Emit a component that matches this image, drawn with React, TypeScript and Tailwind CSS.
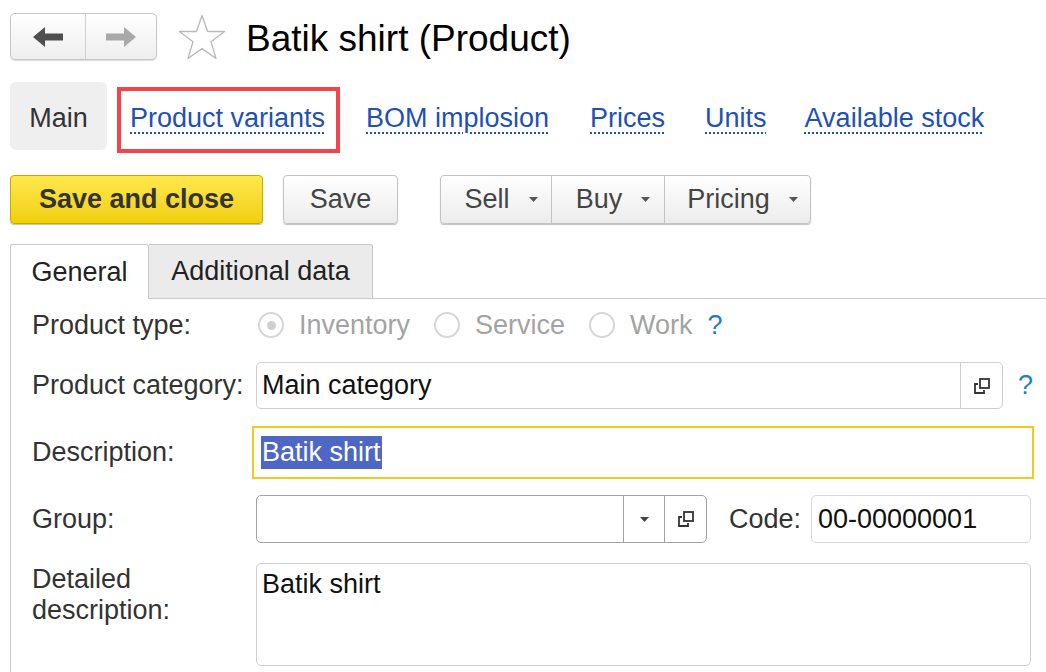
import React from 'react';

// ─── Small drawings ──────────────────────────────────────────

function Arrow({ dir, color }: { dir: 'left' | 'right'; color: string }) {
  return (
    <svg width="30" height="22" viewBox="0 0 30 22" className={dir === 'right' ? 'scale-x-[-1]' : ''}>
      <path d="M0 11 L12 1 V7.5 H30 V14.5 H12 V21 Z" fill={color} />
    </svg>
  );
}

function Star() {
  return (
    <svg width="48" height="46" viewBox="0 0 48 46">
      <polygon
        points="24,1.5 29.6,17.5 46.5,17.5 33,27.8 38,44.5 24,34.6 10,44.5 15,27.8 1.5,17.5 18.4,17.5"
        fill="none"
        stroke="#b9b9b9"
        strokeWidth="1.3"
        strokeLinejoin="round"
      />
    </svg>
  );
}

function OpenIcon() {
  return (
    <svg width="18" height="18" viewBox="0 0 18 18">
      <rect x="7" y="2" width="9" height="9" fill="none" stroke="#333" strokeWidth="1.8" />
      <path d="M5 7 H2 V16 H11 V13" fill="none" stroke="#333" strokeWidth="1.8" />
    </svg>
  );
}

function Caret({ color = '#555' }: { color?: string }) {
  return (
    <svg width="9" height="5" viewBox="0 0 9 5">
      <path d="M0 0 H9 L4.5 5 Z" fill={color} />
    </svg>
  );
}

function Radio({ checked, label }: { checked?: boolean; label: string }) {
  return (
    <div className="flex items-center">
      <span className="flex h-[26px] w-[26px] items-center justify-center rounded-full border-2 border-[#d6d6d6] bg-white">
        {checked && <span className="h-[9px] w-[9px] rounded-full bg-[#cfcfcf]" />}
      </span>
      <span className="ml-[15px] text-[#a3a3a3]">{label}</span>
    </div>
  );
}

// ─── Page ────────────────────────────────────────────────────

const btn =
  'flex h-[49px] items-center rounded-[4px] border border-[#c3c3c3] bg-gradient-to-b from-white to-[#ececec] text-[#444] shadow-[0_1px_1px_rgba(0,0,0,0.25)]';

const linkCls =
  'text-[#1f50b5] underline decoration-dotted decoration-[#1f50b5] decoration-2 underline-offset-[6px]';

const dropCell = 'flex h-full items-center justify-center gap-[19px] pl-[10px]';

export default function App() {
  return (
    <div className="relative h-[672px] w-[1046px] overflow-hidden bg-white font-['Liberation_Sans',Arial,sans-serif] text-[27px] leading-none text-[#333]">
      {/* Title bar */}
      <div className="flex h-[60px] items-end pl-[10px]">
        <div className="flex h-[47px] w-[147px] rounded-[5px] border border-[#c6c6c6] bg-gradient-to-b from-white to-[#eeeeee] shadow-[0_1px_1px_rgba(0,0,0,0.15)]">
          <div className="flex w-[75px] items-center justify-center border-r border-[#d0d0d0]">
            <Arrow dir="left" color="#4f4f4f" />
          </div>
          <div className="flex flex-1 items-center justify-center">
            <Arrow dir="right" color="#a9a9a9" />
          </div>
        </div>
        <div className="mb-[-1px] ml-[21px] self-center pt-[13px]">
          <Star />
        </div>
        <h1 className="ml-[20px] self-center pt-[16px] text-[37px] font-normal text-black">Batik shirt (Product)</h1>
      </div>

      {/* Section links */}
      <div className="mt-[22px] flex items-start pl-[10px]">
        <div className="flex h-[68px] w-[97px] items-center justify-center rounded-[6px] bg-[#efefef] pt-[5px] text-[#333]">
          Main
        </div>
        <div className="ml-[10px] mt-[5px] flex h-[66px] w-[223px] items-center border-4 border-[#f4434a] pb-[4px] pl-[9px]">
          <span className={linkCls}>Product variants</span>
        </div>
        <div className="ml-[26px] flex h-[72px] items-center gap-[41px]">
          <span className={linkCls}>BOM implosion</span>
          <span className={linkCls}>Prices</span>
          <span className="-ml-[1px]">
            <span className={linkCls}>Units</span>
          </span>
          <span className="-ml-[3px]">
            <span className={linkCls}>Available stock</span>
          </span>
        </div>
      </div>

      {/* Command bar */}
      <div className="mt-[21px] flex items-center pl-[10px]">
        <div className="flex h-[49px] w-[253px] items-center justify-center rounded-[4px] border border-[#c9a800] bg-gradient-to-b from-[#ffe84a] to-[#f1cf00] font-bold text-[#333] shadow-[0_1px_1px_rgba(0,0,0,0.25)]">
          Save and close
        </div>
        <div className={`${btn} ml-[20px] w-[115px] justify-center`}>Save</div>
        <div className={`${btn} ml-[42px] w-[371px]`}>
          <div className={`${dropCell} w-[111px] border-r border-[#c3c3c3]`}>
            Sell <Caret />
          </div>
          <div className={`${dropCell} w-[113px] border-r border-[#c3c3c3]`}>
            Buy <Caret />
          </div>
          <div className={`${dropCell} flex-1`}>
            Pricing <Caret />
          </div>
        </div>
      </div>

      {/* Tabs */}
      <div className="mt-[20px] flex pl-[10px]">
        <div className="flex h-[55px] w-[139px] items-center justify-center rounded-t-[3px] border border-b-0 border-[#c8c8c8] bg-white text-[#222]">
          General
        </div>
        <div className="flex h-[55px] w-[224px] items-center justify-center rounded-tr-[3px] border border-l-0 border-[#c8c8c8] bg-[#ebebeb] text-[#222]">
          Additional data
        </div>
        <div className="flex-1 border-b border-[#c8c8c8]" />
      </div>

      {/* Form */}
      <div className="ml-[10px] flex h-[400px] flex-col border-l border-[#c8c8c8] pl-[21px] pt-[5px] text-[#333]">
        <div className="flex h-[42px] items-center">
          <div className="w-[224px]">Product type:</div>
          <div className="ml-[2px] flex items-center gap-[24px]">
            <Radio checked label="Inventory" />
            <Radio label="Service" />
            <Radio label="Work" />
          </div>
          <span className="ml-[15px] text-[#1b7dc9]">?</span>
        </div>

        <div className="mt-[16px] flex h-[47px] items-center">
          <div className="w-[224px]">Product category:</div>
          <div className="flex h-full w-[747px] rounded-[5px] border border-[#cfcfcf]">
            <div className="flex flex-1 items-center pl-[5px] text-[#111]">Main category</div>
            <div className="flex w-[42px] items-center justify-center border-l border-[#cfcfcf]">
              <OpenIcon />
            </div>
          </div>
          <span className="ml-[15px] text-[#1b7dc9]">?</span>
        </div>

        <div className="mt-[17px] flex h-[53px] items-center">
          <div className="w-[220px]">Description:</div>
          <div className="flex h-full w-[782px] items-center border-2 border-[#f5c81c] pl-[7px]">
            <span className="bg-[#4f67c4] px-[1px] py-[3px] text-white">Batik shirt</span>
          </div>
        </div>

        <div className="mt-[16px] flex h-[48px] items-center">
          <div className="w-[224px]">Group:</div>
          <div className="flex h-full w-[451px] rounded-[5px] border border-[#a3a3a3]">
            <div className="flex-1" />
            <div className="flex w-[41px] items-center justify-center border-l border-[#a3a3a3]">
              <Caret color="#444" />
            </div>
            <div className="flex w-[42px] items-center justify-center border-l border-[#a3a3a3]">
              <OpenIcon />
            </div>
          </div>
          <div className="ml-[22px] w-[82px]">Code:</div>
          <div className="flex h-full w-[220px] items-center rounded-[5px] border border-[#d8d8d8] pl-[6px] text-[#111]">
            00-00000001
          </div>
        </div>

        <div className="mt-[20px] flex h-[103px] items-start">
          <div className="w-[224px] pt-[1px] leading-[31px]">
            Detailed
            <br />
            description:
          </div>
          <div className="h-full w-[775px] rounded-[5px] border border-[#d0d0d0] pl-[5px] pt-[7px] text-[#111]">
            Batik shirt
          </div>
        </div>
      </div>
    </div>
  );
}
